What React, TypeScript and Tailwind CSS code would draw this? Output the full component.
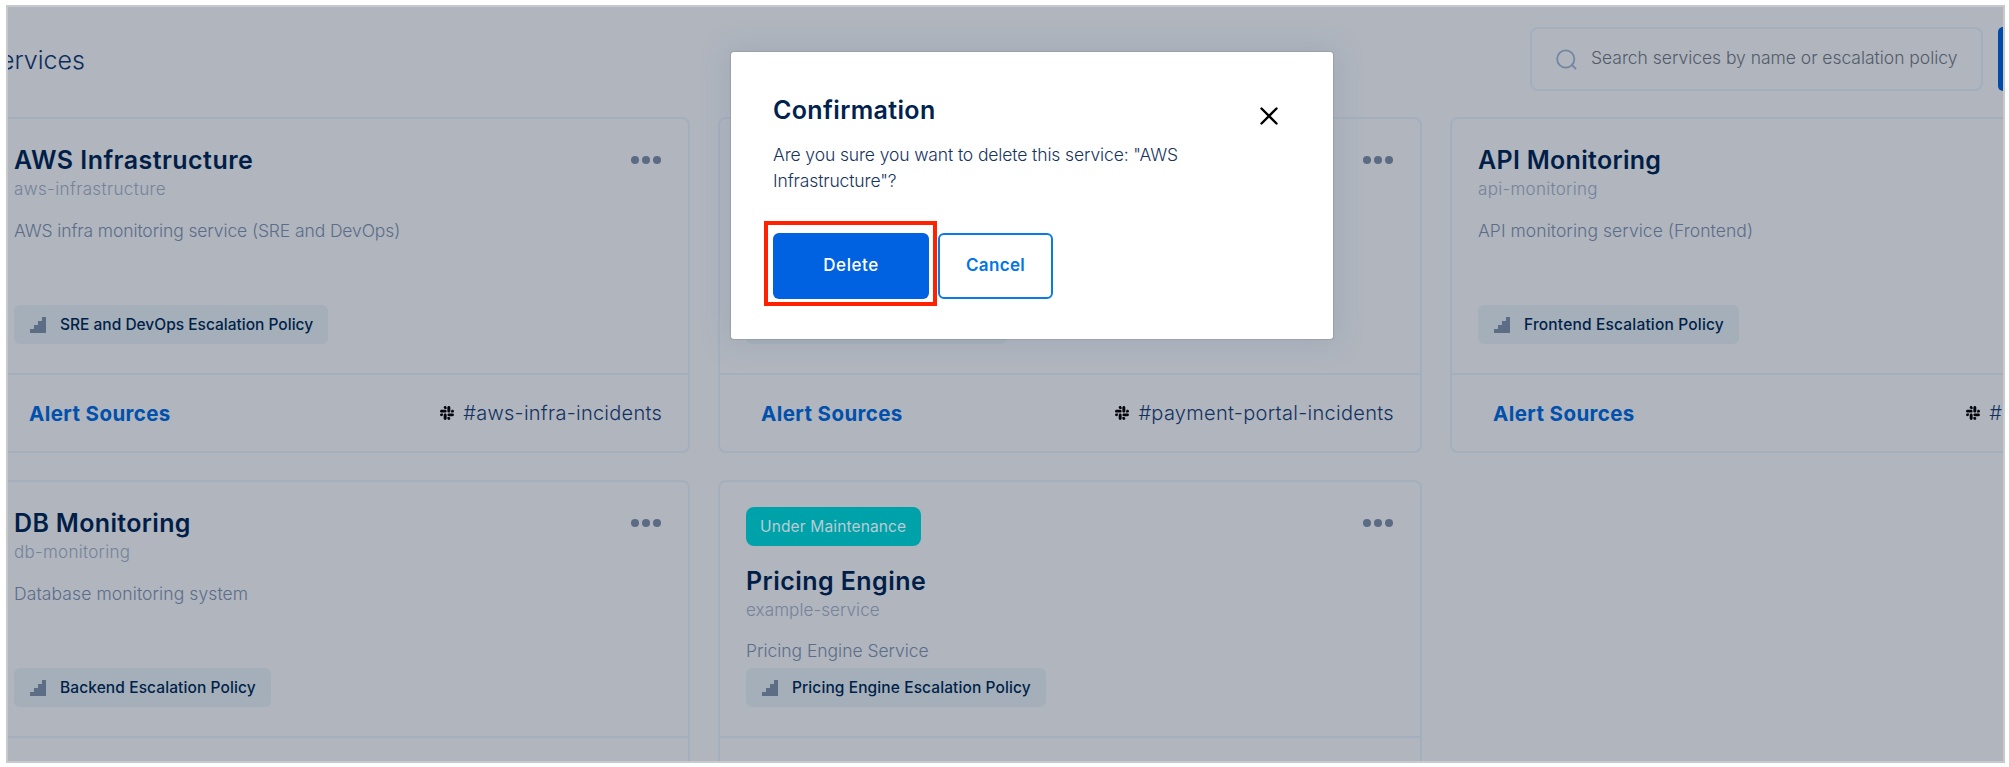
import type { ReactNode } from "react";
import { FaSlack } from "react-icons/fa";

type Service = {
  name: string;
  nameClass: string;
  slug: string;
  slugClass: string;
  description: string;
  descriptionClass: string;
  policy: string;
  policyClass: string;
  footer?: ReactNode;
  hideMenu?: boolean;
  maintenance?: boolean;
};

function StairsIcon() {
  return (
    <svg width="16" height="16" viewBox="0 0 16 16" className="shrink-0 fill-[#5d6d86]">
      <path d="M12 0h4v16H0v-4h4V8h4V4h4z" />
    </svg>
  );
}

function MenuDots() {
  return (
    <div className="absolute top-[37px] right-[27px] flex gap-[3px]">
      <span className="size-2 rounded-full bg-[#5b6b84]" />
      <span className="size-2 rounded-full bg-[#5b6b84]" />
      <span className="size-2 rounded-full bg-[#5b6b84]" />
    </div>
  );
}

function CardShell({ children, footer }: { children: ReactNode; footer?: ReactNode }) {
  return (
    <article className="flex h-[336px] flex-col rounded-lg border-2 border-[#a4afbd]">
      <div className="relative flex h-[254px] flex-col items-start px-[26px] pb-[29px]">{children}</div>
      <div className="flex grow items-center justify-between border-t-2 border-[#a4afbd] pr-[26px] pl-[41px]">
        {footer}
      </div>
    </article>
  );
}

function AlertSources() {
  return (
    <a className="pt-[2px] text-[20.5px] leading-[30px] font-bold tracking-[0.4px] text-[#0050ac]">Alert Sources</a>
  );
}

function Channel({ name, className }: { name: string; className: string }) {
  return (
    <span className="flex items-center gap-[8px]">
      <FaSlack className="size-4 text-[#04070d]" />
      <span className={`text-xl leading-[30px] font-light whitespace-nowrap text-[#14325f] ${className}`}>{name}</span>
    </span>
  );
}

function ServiceCard(s: Service) {
  return (
    <CardShell footer={s.footer}>
      {!s.hideMenu && <MenuDots />}
      {s.maintenance ? (
        <span className="mt-[25px] mb-[18px] flex h-[39px] items-center rounded-lg bg-[#00a2aa] pr-[15px] pl-[14px] text-[15.5px] tracking-[0.14px] text-[#bccbd3]">
          Under Maintenance
        </span>
      ) : (
        <div className="h-6" />
      )}
      <h2 className={`text-[25px] leading-[34px] font-semibold whitespace-nowrap text-[#001e47] ${s.nameClass}`}>{s.name}</h2>
      <p className={`text-[17px] leading-6 font-light text-[#75839a] ${s.slugClass}`}>{s.slug}</p>
      <p className={`text-[17.5px] leading-[26px] font-light text-[#5b6d89] ${s.maintenance ? "mt-4" : "mt-[17px]"} ${s.descriptionClass}`}>
        {s.description}
      </p>
      <span className="mt-auto flex h-[39px] items-center gap-[14px] rounded-md bg-[#a5afb9] pr-[15px] pl-4">
        <StairsIcon />
        <span className={`pt-px text-[15.5px] leading-6 font-medium whitespace-nowrap text-[#001f49] ${s.policyClass}`}>
          {s.policy}
        </span>
      </span>
    </CardShell>
  );
}

function SearchBox() {
  return (
    <div className="flex h-16 w-[453px] items-center rounded-lg border-2 border-[#a4afbd] pl-6">
      <svg width="21" height="21" viewBox="0 0 22 22" className="mr-[14px] shrink-0 fill-none stroke-[#7486a0]" strokeWidth="1.9">
        <circle cx="10.2" cy="10.5" r="9" />
        <path d="M16.5 16.5L21 21" />
      </svg>
      <span className="-mt-[3px] text-[17.5px] leading-6 font-light tracking-[-0.03px] whitespace-nowrap text-[#535b69]">
        Search services by name or escalation policy
      </span>
    </div>
  );
}

function ConfirmDialog() {
  return (
    <section className="absolute top-[45px] left-[723px] h-[287px] w-[602px] rounded-[3px] bg-white px-[42px] pt-[41px] shadow-[0_0_26px_2px_rgba(130,150,168,0.35),0_0_0_1px_rgba(140,140,140,0.4)]">
      <div className="flex items-start justify-between">
        <div>
          <h1 className="text-[25px] leading-[34px] font-semibold tracking-[0.36px] text-[#00224f]">Confirmation</h1>
          <p className="mt-[15px] text-[17.5px] leading-[26px] font-light tracking-[-0.12px] text-[#17345f]">
            Are you sure you want to delete this service: "AWS
            <br />
            Infrastructure"?
          </p>
        </div>
        <svg width="18" height="18" viewBox="0 0 18 18" className="mt-[14px] mr-[13px] stroke-black" strokeWidth="2.4" strokeLinecap="round">
          <path d="M1.5 1.5l15 15M16.5 1.5l-15 15" />
        </svg>
      </div>
      <div className="relative mt-[39px] flex gap-[9px]">
        <button className="h-[66px] w-[156px] rounded-md bg-[#0062e0] pb-px text-[17px] font-medium tracking-[0.55px] text-white">
          Delete
        </button>
        <button className="h-[66px] w-[115px] rounded-md border-2 border-[#0a7ae6] pb-px text-[17px] font-semibold tracking-[0.35px] text-[#0075e8]">
          Cancel
        </button>
        <div className="absolute -top-3 -left-[9px] h-[85px] w-[173px] border-4 border-[#ff2200]" />
      </div>
    </section>
  );
}

export default function App() {
  return (
    <div className="h-[767px] w-[2009px] overflow-hidden bg-white pt-[5px] pl-[6px] font-['Inter','Liberation_Sans',sans-serif]">
      <main className="relative h-[758px] w-[1999px] overflow-hidden border-2 border-[#c8c9ca] bg-[#b0b5be]">
        <header className="flex h-[110px] items-start justify-between pt-5">
          <h1 className="-ml-2 pt-px text-[25px] leading-[64px] font-light text-[#0c2c5c]">ervices</h1>
          <div className="flex gap-[15px]">
            <SearchBox />
            <div className="h-16 w-[5px] rounded-l-lg bg-[#004aa8]" />
          </div>
        </header>
        <div className="-ml-[22px] grid w-[2168px] grid-cols-[704px_704px_704px] gap-x-7 gap-y-[27px]">
          <ServiceCard
            name="AWS Infrastructure"
            nameClass="tracking-[0.45px]"
            slug="aws-infrastructure"
            slugClass="tracking-[0.38px]"
            description="AWS infra monitoring service (SRE and DevOps)"
            descriptionClass="tracking-[-0.11px]"
            policy="SRE and DevOps Escalation Policy"
            policyClass="tracking-[0px]"
            footer={
              <>
                <AlertSources />
                <Channel name="#aws-infra-incidents" className="tracking-[0.25px]" />
              </>
            }
          />
          <CardShell
            footer={
              <>
                <AlertSources />
                <Channel name="#payment-portal-incidents" className="tracking-[0.3px]" />
              </>
            }
          >
            <MenuDots />
            <span className="mt-auto h-[39px] w-[261px] rounded-md bg-[#a5afb9]" />
          </CardShell>
          <ServiceCard
            hideMenu
            name="API Monitoring"
            nameClass="tracking-[0.3px]"
            slug="api-monitoring"
            slugClass="tracking-[0.3px]"
            description="API monitoring service (Frontend)"
            descriptionClass="tracking-[0.06px]"
            policy="Frontend Escalation Policy"
            policyClass="tracking-[0.18px]"
            footer={
              <>
                <AlertSources />
                <div className="mr-[124px]">
                  <Channel name="#" className="tracking-[0px]" />
                </div>
              </>
            }
          />
          <ServiceCard
            name="DB Monitoring"
            nameClass="tracking-[0.34px]"
            slug="db-monitoring"
            slugClass="tracking-[0.28px]"
            description="Database monitoring system"
            descriptionClass="tracking-[0.1px]"
            policy="Backend Escalation Policy"
            policyClass="tracking-[0.1px]"
          />
          <ServiceCard
            maintenance
            name="Pricing Engine"
            nameClass="tracking-[0.45px]"
            slug="example-service"
            slugClass="tracking-[0.1px]"
            description="Pricing Engine Service"
            descriptionClass="tracking-[-0.03px]"
            policy="Pricing Engine Escalation Policy"
            policyClass="tracking-[0.1px]"
          />
        </div>
        <ConfirmDialog />
      </main>
    </div>
  );
}
